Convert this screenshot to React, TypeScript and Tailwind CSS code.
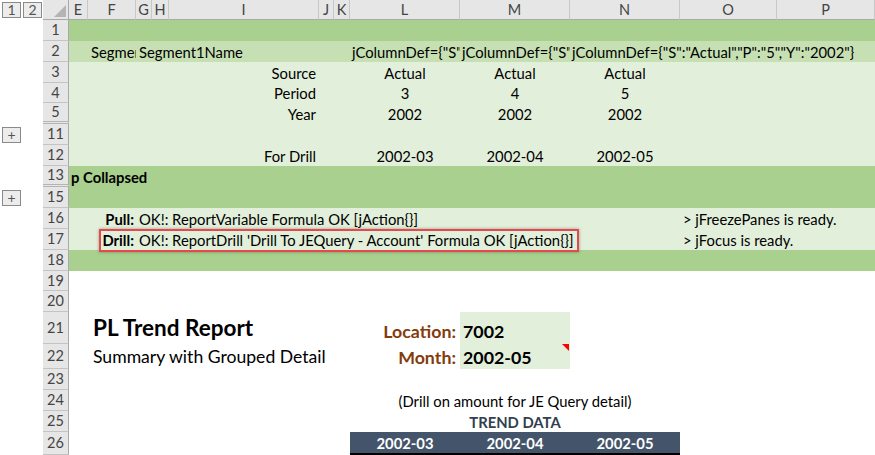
import React from "react"
import clsx from "clsx"

const COLS = "grid grid-cols-[19px_48px_16px_17px_150px_15px_16px_110px_110px_110px_97px_98px]"

const letters: [string, string][] = [
  ["E", "w-[19px]"], ["F", "w-[48px]"], ["G", "w-[16px]"], ["H", "w-[17px]"],
  ["I", "w-[150px]"], ["J", "w-[15px]"], ["K", "w-[16px]"], ["L", "w-[110px]"],
  ["M", "w-[110px]"], ["N", "w-[110px]"], ["O", "w-[97px]"], ["P", "w-[98px]"],
]

function OutlineBtn({ label }: { label: string }) {
  return (
    <div className="w-[19px] h-[16px] border border-[#8a8a8a] bg-[#ececec] text-[#555] text-[14px] leading-none flex items-center justify-center">
      {label}
    </div>
  )
}

function Row({ n, h, bg, gutter, hidden, children }: { n: number; h: string; bg?: string; gutter?: React.ReactNode; hidden?: boolean; children?: React.ReactNode }) {
  return (
    <div className={clsx("flex", h)}>
      <div className="w-[43px] flex items-center pl-[2px]">{gutter}</div>
      <div className={clsx("w-[26px] bg-[#e6e6e6] border-r border-[#a9a9a9] text-[#444] text-[14.5px] flex items-center justify-center", hidden ? "border-b-[3px] border-b-[#b4b4b4] border-double" : "border-b border-b-[#c4c4c4]")}>
        {n}
      </div>
      <div className={clsx(COLS, "relative flex-1", bg)}>{children}</div>
    </div>
  )
}

function C({ className, children }: { className?: string; children?: React.ReactNode }) {
  return <div className={clsx("flex items-end whitespace-nowrap pb-[1px] leading-[18px]", className)}>{children}</div>
}

const green1 = "bg-[#a9d08e]"
const green2 = "bg-[#c6e0b4]"
const green3 = "bg-[#e2efda]"

export default function App() {
  return (
    <div className="w-[875px] h-[455px] overflow-hidden bg-white text-[14.8px] text-black font-[family-name:Lato,sans-serif]">
      {/* column headers */}
      <div className="flex h-[20px]">
        <div className="w-[43px] flex items-start gap-[2px] pl-[2px] pt-[2px]">
          <OutlineBtn label="1" />
          <OutlineBtn label="2" />
        </div>
        <div className="w-[26px] bg-[#e6e6e6] border-r border-b border-[#a9a9a9] flex items-end justify-end p-[2px]">
          <svg width="12" height="12" viewBox="0 0 12 12">
            <polygon points="12,0 12,12 0,12" fill="#b4b4b4" />
          </svg>
        </div>
        {letters.map(([l, w]) => (
          <div key={l} className={clsx(w, "bg-[#e6e6e6] border-r border-b border-r-[#c8c8c8] border-b-[#a9a9a9] text-[#444] text-[14.5px] flex items-center justify-center")}>
            {l}
          </div>
        ))}
      </div>

      <Row n={1} h="h-[21px]" bg={green1} />
      <Row n={2} h="h-[21px]" bg={green2}>
        <C className="col-start-2 overflow-hidden pl-[3px]">Segment1</C>
        <C className="col-start-3 col-span-5 pl-[3px]">Segment1Name</C>
        <C className="col-start-8 overflow-hidden pl-[2px]">jColumnDef={'{"S":"Actual","P":"3","Y":"2002"}'}</C>
        <C className="col-start-9 overflow-hidden pl-[2px]">jColumnDef={'{"S":"Actual","P":"4","Y":"2002"}'}</C>
        <C className="col-start-10 col-span-3 pl-[2px]">jColumnDef={'{"S":"Actual","P":"5","Y":"2002"}'}</C>
      </Row>
      <Row n={3} h="h-[21px]" bg={green3}>
        <C className="col-start-5 justify-end pr-[3px]">Source</C>
        <C className="col-start-8 justify-center">Actual</C>
        <C className="col-start-9 justify-center">Actual</C>
        <C className="col-start-10 justify-center">Actual</C>
      </Row>
      <Row n={4} h="h-[20px]" bg={green3}>
        <C className="col-start-5 justify-end pr-[3px]">Period</C>
        <C className="col-start-8 justify-center">3</C>
        <C className="col-start-9 justify-center">4</C>
        <C className="col-start-10 justify-center">5</C>
      </Row>
      <Row n={5} h="h-[21px]" bg={green3} hidden>
        <C className="col-start-5 justify-end pr-[3px]">Year</C>
        <C className="col-start-8 justify-center">2002</C>
        <C className="col-start-9 justify-center">2002</C>
        <C className="col-start-10 justify-center">2002</C>
      </Row>
      <Row n={11} h="h-[21px]" bg={green3} gutter={<OutlineBtn label="+" />} />
      <Row n={12} h="h-[21px]" bg={green3}>
        <C className="col-start-5 justify-end pr-[3px]">For Drill</C>
        <C className="col-start-8 justify-center">2002-03</C>
        <C className="col-start-9 justify-center">2002-04</C>
        <C className="col-start-10 justify-center">2002-05</C>
      </Row>
      <Row n={13} h="h-[21px]" bg={green1} hidden>
        <C className="col-start-1 col-span-5 pl-[2px] font-bold">p Collapsed</C>
      </Row>
      <Row n={15} h="h-[21px]" bg={green1} gutter={<OutlineBtn label="+" />} />
      <Row n={16} h="h-[21px]" bg={green3}>
        <C className="col-start-2 justify-end pr-[2px] font-bold">Pull:</C>
        <C className="col-start-3 col-span-6 pl-[3px]">OK!: ReportVariable Formula OK [jAction{"{}"}]</C>
        <C className="col-start-11 col-span-2 pl-[3px]">&gt; jFreezePanes is ready.</C>
      </Row>
      <Row n={17} h="h-[21px]" bg={green3}>
        <C className="col-start-2 justify-end pr-[2px] font-bold">Drill:</C>
        <C className="col-start-3 col-span-8 pl-[3px]">OK!: ReportDrill 'Drill To JEQuery - Account' Formula OK [jAction{"{}"}]</C>
        <C className="col-start-11 col-span-2 pl-[3px]">&gt; jFocus is ready.</C>
        <div className="absolute left-[30px] top-0 w-[480px] h-[23px] border-2 border-[#e5484d] shadow-[0_0_3px_rgba(0,0,0,0.35)] z-10" />
      </Row>
      <Row n={18} h="h-[21px]" bg={green1} />
      <Row n={19} h="h-[20px]" />
      <Row n={20} h="h-[21px]" />
      <Row n={21} h="h-[32px]">
        <C className="col-start-2 col-span-6 pl-[5px] pb-[2px] text-[22.5px] leading-[28px] font-bold">PL Trend Report</C>
        <C className="col-start-8 justify-end pr-[4px] pb-[2px] text-[17.8px] leading-[22px] font-bold text-[#843c0c]">Location:</C>
        <C className="col-start-9 bg-[#e2efda] pl-[3px] pb-[2px] text-[17.8px] leading-[22px] font-bold">7002</C>
      </Row>
      <Row n={22} h="h-[25px]">
        <C className="col-start-2 col-span-6 pl-[5px] pb-[1px] text-[17.6px] leading-[22px]">Summary with Grouped Detail</C>
        <C className="col-start-8 justify-end pr-[4px] pb-[1px] text-[17.8px] leading-[22px] font-bold text-[#843c0c]">Month:</C>
        <C className="col-start-9 relative bg-[#e2efda] pl-[3px] pb-[1px] text-[17.8px] leading-[22px] font-bold">
          2002-05
          <span className="absolute right-[1px] top-0 w-0 h-0 border-t-[7px] border-l-[7px] border-t-[#ff0000] border-l-transparent" />
        </C>
      </Row>
      <Row n={23} h="h-[21px]" />
      <Row n={24} h="h-[21px]">
        <C className="col-start-9 justify-center">(Drill on amount for JE Query detail)</C>
      </Row>
      <Row n={25} h="h-[21px]">
        <C className="col-start-9 justify-center font-bold text-[#333f4f]">TREND DATA</C>
      </Row>
      <Row n={26} h="h-[23px]">
        <C className="col-start-8 justify-center bg-[#44546a] text-white font-bold border-b-2 border-black">2002-03</C>
        <C className="col-start-9 justify-center bg-[#44546a] text-white font-bold border-b-2 border-black">2002-04</C>
        <C className="col-start-10 justify-center bg-[#44546a] text-white font-bold border-b-2 border-black">2002-05</C>
      </Row>
    </div>
  )
}
